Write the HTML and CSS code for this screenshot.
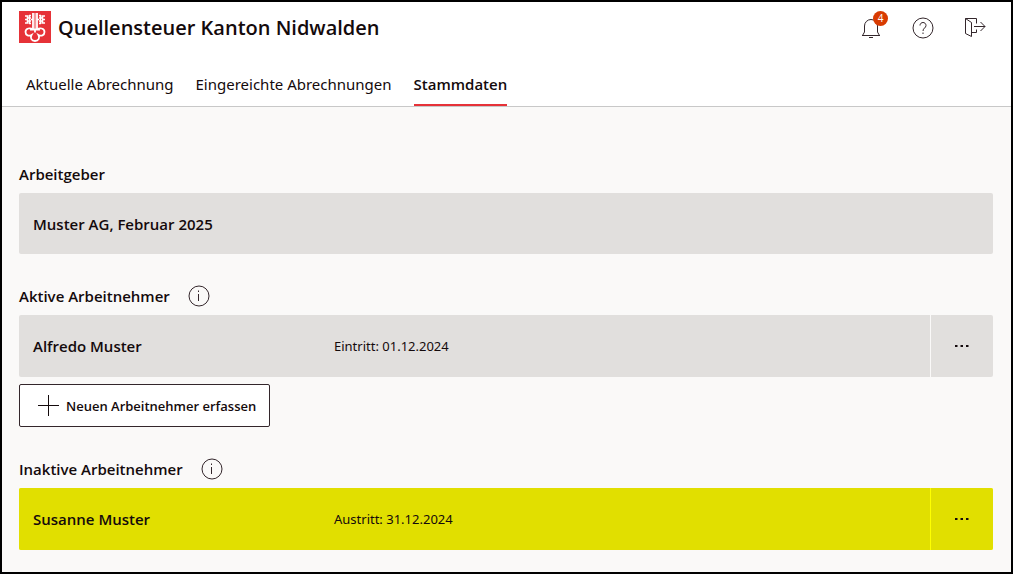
FILE: index.html
```html
<!DOCTYPE html>
<html lang="de">
<head>
    <meta charset="UTF-8">
    <meta name="viewport" content="width=device-width, initial-scale=1.0">
    <title>Quellensteuer Kanton Nidwalden</title>
    <link rel="stylesheet" href="styles.css">
</head>
<body>

    <header class="header">
        <div class="header-top">
            <div class="brand">
                <svg class="logo" viewBox="0 0 32 32" aria-hidden="true">
                    <rect width="32" height="32" fill="#e63238"/>
                    <g fill="none" stroke="#fff">
                        <!-- shafts -->
                        <path d="M14 2v16M18 2v16" stroke-width="1.800"/>
                        <path d="M16 2v16" stroke-width="1"/>
                        <!-- key bits -->
                        <path d="M6 5h2.500v2H12M6 12h2.500v-2H12M6 8.500h3M10.500 4v9M26 5h-2.500v2H20M26 12h-2.500v-2H20M26 8.500h-3M21.500 4v9M12 8.500h2M18 8.500h2M10 4.500h2M10 12.500h2M20 4.500h2M20 12.500h2" stroke-width="1.600"/>
                        <!-- bow -->
                        <path d="M13.500 18.500c-2-2-7-1.500-7 2.500 0 3.500 3.500 4.500 6 3-1.500 3 0 6 3.500 6s5-3 3.500-6c2.500 1.500 6 .5 6-3 0-4-5-4.500-7-2.500M11 18.500h10M16 18v3.500" stroke-width="1.800"/>
                    </g>
                </svg>
                <h1>Quellensteuer Kanton Nidwalden</h1>
            </div>
            <div class="header-actions">
                <button class="icon-button" aria-label="Mitteilungen">
                    <svg class="icon" viewBox="0 0 22 22">
                        <path d="M2 18.500h18M2.500 18.500L4.500 15V9a6.500 6.500 0 0 1 13 0v6l2 3.500M9 20.500h4"/>
                    </svg>
                    <span class="badge">4</span>
                </button>
                <button class="icon-button" aria-label="Hilfe">
                    <svg class="icon" viewBox="0 0 22 22">
                        <circle cx="11" cy="11" r="10"/>
                        <path d="M8 8.500c0-4 6-4 6 0 0 2.500-3 2.500-3 5.500M11 15.500v1.500"/>
                    </svg>
                </button>
                <button class="icon-button" aria-label="Abmelden">
                    <svg class="icon" viewBox="0 0 22 22">
                        <path d="M1.500 1.500v15l6 3V5.500l-6-4h11v5M7.500 15.500h5v-3M10 9.500h11M16.500 5l4.500 4.500-4.500 4.500"/>
                    </svg>
                </button>
            </div>
        </div>
        <nav class="tabs">
            <a href="#" class="tab">Aktuelle Abrechnung</a>
            <a href="#" class="tab">Eingereichte Abrechnungen</a>
            <a href="#" class="tab active" aria-current="page">Stammdaten</a>
        </nav>
    </header>

    <main class="content">
        <section class="section">
            <div class="section-title">
                <h2>Arbeitgeber</h2>
            </div>
            <div class="card employer">
                <div class="card-main">
                    <strong class="name">Muster AG, Februar 2025</strong>
                </div>
            </div>
        </section>

        <section class="section">
            <div class="section-title">
                <h2>Aktive Arbeitnehmer</h2>
                <button class="icon-button" aria-label="Info">
                    <svg class="icon" viewBox="0 0 22 22">
                        <circle cx="11" cy="11" r="10"/>
                        <path d="M10.500 9v7M10.500 5.500v1.500"/>
                    </svg>
                </button>
            </div>
            <div class="card">
                <div class="card-main">
                    <strong class="name">Alfredo Muster</strong>
                    <span class="date">Eintritt: 01.12.2024</span>
                </div>
                <button class="more" aria-label="Mehr">
                    <svg class="dots" viewBox="0 0 16 4"><path d="M1 1h2.500v2H1zM6.500 1H9v2H6.500zM12 1h2.500v2H12z"/></svg>
                </button>
            </div>
            <button class="add-employee">
                <svg class="icon" viewBox="0 0 22 22">
                    <path class="plus" d="M10.500 0v21M0 10.500h21"/>
                </svg>
                Neuen Arbeitnehmer erfassen
            </button>
        </section>

        <section class="section">
            <div class="section-title">
                <h2>Inaktive Arbeitnehmer</h2>
                <button class="icon-button" aria-label="Info">
                    <svg class="icon" viewBox="0 0 22 22">
                        <circle cx="11" cy="11" r="10"/>
                        <path d="M10.500 9v7M10.500 5.500v1.500"/>
                    </svg>
                </button>
            </div>
            <div class="card inactive">
                <div class="card-main">
                    <strong class="name">Susanne Muster</strong>
                    <span class="date">Austritt: 31.12.2024</span>
                </div>
                <button class="more" aria-label="Mehr">
                    <svg class="dots" viewBox="0 0 16 4"><path d="M1 1h2.500v2H1zM6.500 1H9v2H6.500zM12 1h2.500v2H12z"/></svg>
                </button>
            </div>
        </section>
    </main>

</body>
</html>
```
FILE: styles.css
```css
* {
    box-sizing: border-box;
}
body {
    margin: 0;
    min-height: 100vh;
    border: 2px solid #000;
    background-color: #faf9f8;
    color: #140a0c;
    font-family: "Segoe UI", "Open Sans", sans-serif;
    font-size: 15px;
}
h1,
h2 {
    margin: 0;
    font-weight: 600;
}
h1 {
    font-size: 20px;
    line-height: 34px;
}
h2 {
    font-size: 15px;
}
button {
    padding: 0;
    border: none;
    background: none;
    color: inherit;
    font-family: inherit;
    cursor: pointer;
}

/* Header */
.header {
    background-color: #fff;
    border-bottom: 1px solid #c8c8c8;
}
.header-top {
    display: flex;
    justify-content: space-between;
    align-items: center;
    padding: 9px 25px 0 17px;
}
.brand {
    display: flex;
    align-items: flex-start;
    gap: 7px;
}
.logo {
    width: 32px;
    height: 32px;
}
.header-actions {
    display: flex;
    gap: 30px;
}
.icon-button {
    position: relative;
    display: flex;
}
.icon {
    width: 22px;
    height: 22px;
    fill: none;
    stroke: #33262b;
    stroke-width: 1;
}
.badge {
    position: absolute;
    top: -6px;
    right: -6px;
    width: 15px;
    height: 15px;
    border-radius: 50%;
    background-color: #d83b01;
    color: #fff;
    font-size: 10px;
    line-height: 15px;
    text-align: center;
}

/* Tabs */
.tabs {
    display: flex;
    gap: 22px;
    padding: 22px 24px 0;
}
.tab {
    padding-bottom: 3px;
    border-bottom: 2px solid transparent;
    color: inherit;
    font-family: "Segoe UI", "Noto Sans", sans-serif;
    line-height: 34px;
    text-decoration: none;
}
.tab.active {
    border-bottom-color: #e63238;
    font-family: inherit;
    font-weight: 600;
}

/* Content */
.content {
    display: flex;
    flex-direction: column;
    gap: 23px;
    padding: 48px 18px 22px 17px;
}
.section-title {
    display: flex;
    align-items: center;
    gap: 18px;
    height: 38px;
}
.card {
    display: flex;
    gap: 1px;
    min-height: 62px;
    border-radius: 2px;
    overflow: hidden;
}
.card.employer {
    min-height: 61px;
}
.card-main,
.more {
    background-color: #e1dfdd;
}
.card-main {
    flex: 1;
    display: flex;
    align-items: center;
    padding: 0 14px;
}
.name {
    width: 301px;
    font-weight: 600;
}
.date {
    font-family: "Segoe UI", "Noto Sans", sans-serif;
    font-size: 13px;
}
.more {
    display: flex;
    justify-content: center;
    align-items: center;
    width: 62px;
}
.dots {
    width: 16px;
    height: 4px;
    fill: #140a0c;
}
.inactive {
    background-color: #ffff00;
}
.inactive .card-main,
.inactive .more {
    background-color: #e1df00;
}
.add-employee {
    display: flex;
    align-items: center;
    gap: 6px;
    height: 43px;
    margin-top: 7px;
    padding: 0 13px 0 18px;
    border: 1px solid #33262b;
    border-radius: 2px;
    background-color: #fff;
    font-size: 13px;
    font-weight: 600;
}
.plus {
    stroke: #140a0c;
}
```
